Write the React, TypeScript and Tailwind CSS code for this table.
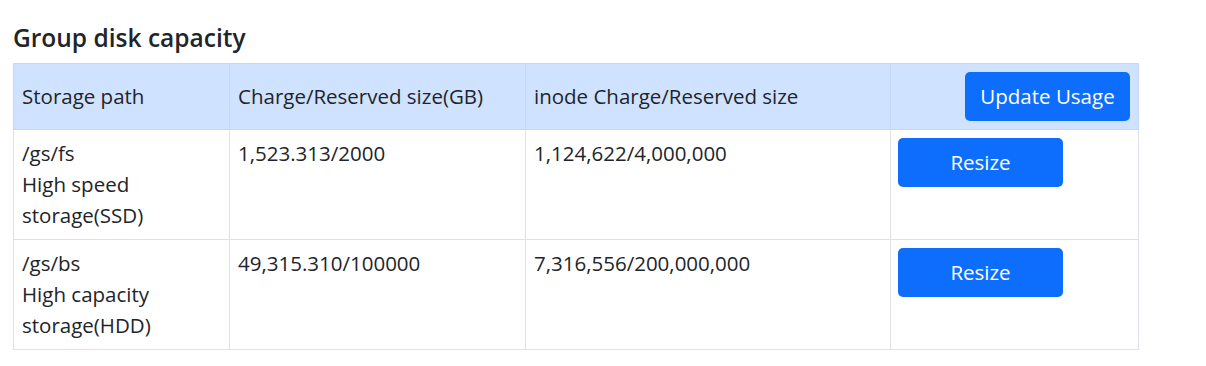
import React from 'react';

interface Row {
  path: string;
  kind: string[];
  size: string;
  inode: string;
}

const rows: Row[] = [
  { path: '/gs/fs', kind: ['High speed', 'storage(SSD)'], size: '1,523.313/2000', inode: '1,124,622/4,000,000' },
  { path: '/gs/bs', kind: ['High capacity', 'storage(HDD)'], size: '49,315.310/100000', inode: '7,316,556/200,000,000' },
];

const font = { fontFamily: '"Open Sans", "Noto Sans", sans-serif' };

const App: React.FC = () => {
  return (
    <div className="w-[1206px] h-[366px] bg-white text-[#212529] pl-[13px] pt-[22px]" style={font}>
      <h2 className="text-[24.5px] font-semibold leading-[32px] mb-[9px]">Group disk capacity</h2>

      <table className="border-collapse text-[20.5px] leading-[31px]">
        <thead>
          <tr className="bg-[#cfe2ff] h-[66px]">
            <th className="w-[216px] px-[8px] text-left font-normal border border-[#c5d7f2]">Storage path</th>
            <th className="w-[296px] px-[8px] text-left font-normal border border-[#c5d7f2]">Charge/Reserved size(GB)</th>
            <th className="w-[365px] px-[8px] text-left font-normal border border-[#c5d7f2]">inode Charge/Reserved size</th>
            <th className="w-[248px] px-[8px] text-right font-normal border border-[#c5d7f2]">
              <button className="w-[165px] h-[49px] bg-[#0d6efd] text-white rounded-[5px] text-[20.5px]">Update Usage</button>
            </th>
          </tr>
        </thead>
        <tbody>
          {rows.map((r) => (
            <tr key={r.path} className="h-[110px] align-top">
              <td className="px-[8px] pt-[8px] border border-[#dee2e6]">
                <div>{r.path}</div>
                {r.kind.map((k) => (
                  <div key={k}>{k}</div>
                ))}
              </td>
              <td className="px-[8px] pt-[8px] border border-[#dee2e6]">{r.size}</td>
              <td className="px-[8px] pt-[8px] border border-[#dee2e6]">{r.inode}</td>
              <td className="px-[7px] pt-[8px] border border-[#dee2e6]">
                <button className="w-[165px] h-[49px] bg-[#0d6efd] text-white rounded-[5px] text-[20.5px]">Resize</button>
              </td>
            </tr>
          ))}
        </tbody>
      </table>
    </div>
  );
};

export default App;
